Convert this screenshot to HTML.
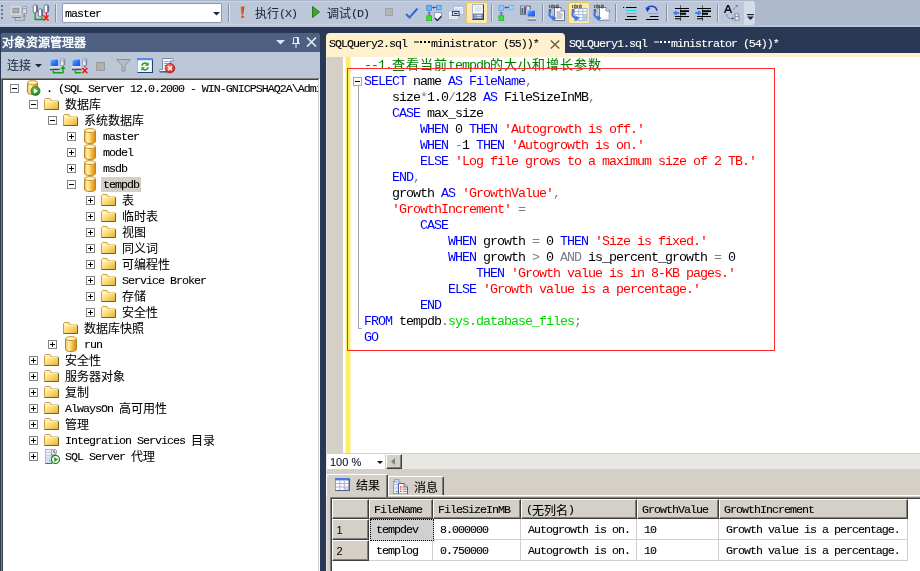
<!DOCTYPE html><html lang="zh"><head><meta charset="utf-8"><title>SSMS</title><style>
*{box-sizing:border-box;margin:0;padding:0}
html,body{width:920px;height:571px;overflow:hidden}
body{position:relative;background:#293955;font-family:"Liberation Mono",monospace;font-size:11.6667px;letter-spacing:-1px;color:#000;line-height:16px;-webkit-text-stroke:0.1px}
#app{position:absolute;left:0;top:0;width:920px;height:571px;overflow:hidden;will-change:transform}
.a{position:absolute}
svg{display:block}
svg.el{display:inline-block;vertical-align:-2px}
svg.cj{display:inline-block;vertical-align:-3px;stroke:currentColor;stroke-width:6px}
svg.cj text{font-family:"Liberation Sans","Noto Sans CJK SC",sans-serif;font-size:1000px;letter-spacing:0;-webkit-text-stroke:0}
/* toolbar */
#tray{left:0;top:0;width:920px;height:27px;background:linear-gradient(#aab6cb 0,#aab6cb 1px,#adb9cd 1px,#adb9cd 25px,#b9c5d8 25px)}
#tb{left:0;top:0;width:755px;height:25px;background:linear-gradient(#aab6cb 0,#aab6cb 1px,#cbd4e4 1px,#cbd4e4 2px,#bcc8da 2px,#bcc8da 24px,#c9d3e3 24px);border-radius:0 4px 4px 0}
.sep{width:1px;top:4px;height:18px;background:#8591a7;box-shadow:1px 0 0 #dde3ee}
.tbt{top:6px;height:16px;color:#1b293e;white-space:nowrap}
.chk{top:2px;height:22px;background:#fde9ae;border:1px solid #e5c365;border-radius:2px}
#combo{left:62px;top:3px;width:160px;height:20px;background:#fff;border:1px solid #8e9bb5;border-radius:2px}
/* explorer */
#oe{left:0;top:33px;width:320px;height:538px;background:#bcc7d8;border-left:1px solid #293955;border-radius:4px 4px 0 0;overflow:hidden}
#oet{left:0;top:0;width:320px;height:19px;background:#4d6082;color:#fff}
#tree{left:0;top:45px;width:319px;height:500px;background:#fff;border:1px solid;border-color:#808080 #fff #fff #808080;overflow:hidden}
#tree:before{content:"";position:absolute;left:0;top:0;right:0;bottom:0;border:1px solid;border-color:#404040 #d4d0c8 #d4d0c8 #404040;z-index:2}
.row{left:0;width:320px;height:16px;white-space:nowrap}
.ex{width:9px;height:9px;border:1px solid #848484;background:#fff}
.ex:before{content:"";position:absolute;left:1px;top:3px;width:5px;height:1px;background:#000}
.ex.p:after{content:"";position:absolute;left:3px;top:1px;width:1px;height:5px;background:#000}
.lbl{top:1px;height:15px;line-height:16px}
.lbl svg.cj{vertical-align:-2px}
.sel{background:#d4d0c8;padding:0 2px;margin-left:-2px}
/* tabs */
#band{left:326px;top:53px;width:594px;height:4px;background:#fff1ce}
#tab1{left:326px;top:33px;width:239px;height:20px;background:#fff1ce;border-radius:4px 4px 0 0;white-space:nowrap}
#tab2{left:566px;top:33px;width:240px;height:19px;color:#fff;white-space:nowrap}
.tabt{left:3px;top:3px;line-height:16px}
/* editor */
#ed{left:326px;top:57px;width:594px;height:396px;background:#fff;overflow:hidden}
#mg{left:0;top:0;width:17px;height:396px;background:#d4d0c8;border-left:1px solid #e6e3dc}
#yb{left:19px;top:0;width:6px;height:396px;background:linear-gradient(90deg,#fffbd8 0,#fff29a 1px,#ffee62 1px,#ffee62 4px,#ffee62 5px,#fff6b8 5px)}
#code{left:38px;top:1px;font-size:13.3333px;letter-spacing:-1px;-webkit-text-stroke:0;line-height:16px;white-space:pre}
#code svg.cj{vertical-align:-2px}
.k{color:#00f}.s{color:#f00}.g{color:#808080}.c{color:#008000}.y{color:#00d800}
#rr{left:347px;top:68px;width:428px;height:283px;border:1px solid #ff2a2a}
/* results */
#rp{left:326px;top:453px;width:594px;height:118px;background:#d4d0c8;box-shadow:inset 1px 0 0 #e8e5de}
#zc{left:1px;top:1px;width:58px;height:15px;background:#fff;font-family:"Liberation Sans",sans-serif;font-size:11px;letter-spacing:0;line-height:15px;color:#10102a}
#sb{left:60px;top:1px;width:16px;height:15px;background:#d4d0c8;border:1px solid;border-color:#fff #404040 #404040 #fff;box-shadow:inset -1px -1px 0 #808080}
#trk{left:76px;top:1px;width:518px;height:15px;background:#e9e7e3}
.rt{white-space:nowrap}
#grid{left:4px;top:44px;width:600px;height:90px;background:#fff;border:1px solid #808080}
#grid:before{content:"";position:absolute;left:0;top:0;right:0;bottom:0;border:1px solid #404040}
.hc{height:20px;background:#d4d0c8;border:1px solid;border-color:#fff #404040 #404040 #fff;box-shadow:inset -1px -1px 0 #808080;white-space:nowrap;overflow:hidden;line-height:16px;padding-top:2px}
.dc{height:21px;border-right:1px solid #d4d0c8;border-bottom:1px solid #d4d0c8;white-space:nowrap;line-height:20px;padding-left:7px;padding-top:1px;overflow:hidden}
.rh{font-family:"Liberation Sans",sans-serif;font-size:11px;letter-spacing:0;padding-left:3.5px;padding-top:1px;line-height:19px;-webkit-text-stroke:0}
</style></head><body><div id="app"><svg width="0" height="0" style="position:absolute"><defs>
<linearGradient id="gFold" x1="0" y1="0" x2="1" y2="1"><stop offset="0" stop-color="#fff9d2"/><stop offset=".5" stop-color="#fbdc7a"/><stop offset="1" stop-color="#eeaa2a"/></linearGradient>
<linearGradient id="gCyl" x1="0" y1="0" x2="1" y2="0"><stop offset="0" stop-color="#f3bd3e"/><stop offset=".3" stop-color="#fff2ac"/><stop offset=".7" stop-color="#f2b230"/><stop offset="1" stop-color="#d68810"/></linearGradient>
<linearGradient id="gMon" x1="0" y1="0" x2="1" y2="1"><stop offset="0" stop-color="#7db4ff"/><stop offset=".5" stop-color="#2f74f4"/><stop offset="1" stop-color="#1550e0"/></linearGradient>
<linearGradient id="gGray" x1="0" y1="0" x2="1" y2="1"><stop offset="0" stop-color="#d8d8d8"/><stop offset="1" stop-color="#9a9a9a"/></linearGradient>
<linearGradient id="gExcl" x1="0" y1="0" x2="1" y2="0"><stop offset="0" stop-color="#f58a4a"/><stop offset="1" stop-color="#c62800"/></linearGradient>
<radialGradient id="gGreen" cx=".4" cy=".35" r=".7"><stop offset="0" stop-color="#6fd05c"/><stop offset="1" stop-color="#1f7a1c"/></radialGradient>
<radialGradient id="gRed" cx=".4" cy=".35" r=".7"><stop offset="0" stop-color="#ff8a7a"/><stop offset="1" stop-color="#c01818"/></radialGradient>

<g id="i-folder">
<path d="M0.5 3.5v10h14v-8.500h-7l-1.500-2.500h-4.500z" fill="url(#gFold)" stroke="#c9a044"/>
<path d="M14.500 5.500v8h-14" stroke="#7c5f26" fill="none"/>
<path d="M1.500 5.500h12" stroke="#fffbe0" stroke-width="1" opacity=".7"/>
</g>
<g id="i-db">
<path d="M2.5 2.5v11c0 1.2 2.4 2 5.5 2s5.500-.8 5.500-2v-11z" fill="url(#gCyl)" stroke="#b8862a"/>
<ellipse cx="8" cy="2.600" rx="5.500" ry="2" fill="#fff3b8" stroke="#c89a3a"/>
</g>
<g id="i-server">
<path d="M2.500 2.500v10c0 1.200 2.200 2 5 2s5-.8 5-2v-10z" fill="url(#gCyl)" stroke="#b8862a"/>
<ellipse cx="7.500" cy="2.600" rx="5" ry="2" fill="#fff3b8" stroke="#c89a3a"/>
<circle cx="10.500" cy="11" r="4.600" fill="url(#gGreen)" stroke="#1c6a1a" stroke-width=".6"/>
<path d="M9 8.500v5l4-2.500z" fill="#fff"/>
</g>
<g id="i-agent">
<rect x="1.500" y="1.500" width="6.500" height="14" fill="#e9effa" stroke="#9fb2d6" stroke-width=".9"/>
<path d="M8 2v13.500h-6.500" stroke="#52648c" stroke-width="1" fill="none"/>
<path d="M2.500 4.500h5M2.500 7.500h5" stroke="#b4c4e4" stroke-width=".9"/>
<rect x="2.300" y="8.500" width="5" height="6" fill="#cfdcf4"/>
<circle cx="9.900" cy="4" r="2.800" fill="#f4f7fc" stroke="#8a96b0" stroke-width=".9"/>
<path d="M9.900 2.300v1.900l1.500 .9" stroke="#222" stroke-width=".9" fill="none"/>
<circle cx="11.500" cy="11.400" r="4" fill="#fff" stroke="#1f7a1c" stroke-width="1.200"/>
<path d="M10.200 8.900v5l3.900-2.500z" fill="#2a9a22"/>
<rect x="5.300" y="12.300" width="1.300" height="1.300" fill="#3fe03a"/>
</g>

<g id="i-conn">
<rect x="0.400" y="1.400" width="9.800" height="8.800" fill="#dfe8f6" stroke="#b4c4de" stroke-width=".8"/>
<rect x="1.400" y="2.400" width="7.800" height="6.600" fill="url(#gMon)"/>
<path d="M0.500 11h10" stroke="#e9eef7" stroke-width="1.400"/>
<path d="M1 12.400h9.500" stroke="#3c4f78" stroke-width="1.600"/>
<path d="M2 11.200h2" stroke="#f6e27a" stroke-width="1"/>
<rect x="11.600" y="1.800" width="4.200" height="6.700" rx=".9" fill="#f7f9fd" stroke="#7f8ea8" stroke-width=".9"/>
<path d="M15 2.300v5.700" stroke="#50608a" stroke-width=".9"/>
<path d="M12.600 3.800h1.600" stroke="#5b6f92" stroke-width=".8"/>

<path d="M4.300 13.500v2.300h9.700v-5" stroke="#14a014" stroke-width="1.400" fill="none"/>
<path d="M11.300 12l2.700-3.200 2.700 3.200z" fill="#14a014"/>
</g>
<g id="i-disc">
<rect x="0.400" y="1.400" width="9.800" height="8.800" fill="#dfe8f6" stroke="#b4c4de" stroke-width=".8"/>
<rect x="1.400" y="2.400" width="7.800" height="6.600" fill="url(#gMon)"/>
<path d="M0.500 11h10" stroke="#e9eef7" stroke-width="1.400"/>
<path d="M1 12.400h9.500" stroke="#3c4f78" stroke-width="1.600"/>
<path d="M2 11.200h2" stroke="#f6e27a" stroke-width="1"/>
<rect x="11.600" y="1.800" width="4.200" height="6.700" rx=".9" fill="#f7f9fd" stroke="#7f8ea8" stroke-width=".9"/>
<path d="M15 2.300v5.700" stroke="#50608a" stroke-width=".9"/>
<path d="M12.600 3.800h1.600" stroke="#5b6f92" stroke-width=".8"/>

<path d="M4.300 13.500v2.300h5.700" stroke="#14a014" stroke-width="1.400" fill="none"/>
<path d="M14 8.700v2" stroke="#f01818" stroke-width="1"/>
<path d="M11.300 11l5 5.300M16.300 11l-5 5.300" stroke="#f01818" stroke-width="1.600"/>
</g>
<g id="i-conn-gray">
<rect x="1" y="1.500" width="9.500" height="8" fill="#c9ccd2" stroke="#d9dce2" stroke-width=".8"/>
<rect x="2.500" y="3" width="6.500" height="5" fill="#8f9399"/>
<rect x="3.300" y="3.800" width="4.900" height="3.400" fill="#a9adb3"/>
<path d="M1.500 11h9.500" stroke="#c0c4ca" stroke-width="2.400"/>
<path d="M2 12.500h9" stroke="#7d828a" stroke-width="1"/>
<rect x="12.400" y="1.500" width="4.200" height="7" rx=".8" fill="#d9dce2" stroke="#8d929b" stroke-width=".9"/>
<path d="M13.300 3.500h2.400" stroke="#7d828a" stroke-width=".8"/>
<path d="M5.300 13v2.700h9v-5.500" stroke="#8f949c" stroke-width="1.100" fill="none"/>
<path d="M12 11.700l2.300-2.700 2.300 2.700z" fill="#8f949c"/>
</g>
<g id="i-chgconn">
<rect x="1.200" y="1" width="4.300" height="7.500" rx="1.500" fill="#fdfdff" stroke="#50608a" stroke-width=".8"/>
<path d="M4.800 1.500v6.500" stroke="#2f3f68" stroke-width="1"/>
<rect x="6.400" y="5" width="4.200" height="7.400" rx="1.500" fill="#fdfdff" stroke="#50608a" stroke-width=".8"/>
<path d="M9.900 5.500v6.500" stroke="#2f3f68" stroke-width="1"/>
<rect x="12.200" y="1" width="4.400" height="7.500" rx="1.500" fill="#fdfdff" stroke="#50608a" stroke-width=".8"/>
<path d="M15.900 1.500v6.500" stroke="#2f3f68" stroke-width="1"/>
<path d="M3.100 8.600v6.900h6.900v-3" stroke="#149a14" stroke-width="1.300" fill="none"/>
<path d="M14.400 8.600v5" stroke="#f01818" stroke-width="1.100"/>
<path d="M10.500 15.500h3" stroke="#f01818" stroke-width="1.100"/>
<path d="M11.500 11.500l5 5M16.500 11.500l-5 5" stroke="#f01818" stroke-width="1.500"/>
</g>
<g id="i-excl">
<path d="M1.300 0.500h4l-1 8h-2z" fill="url(#gExcl)"/>
<circle cx="3.300" cy="10.800" r="1.500" fill="url(#gExcl)"/>
</g>
<g id="i-plan">
<rect x="0.800" y="0.500" width="4.700" height="5" fill="#6ab6ff" stroke="#3a86e8" stroke-width=".8"/>
<rect x="10.500" y="0.500" width="4.700" height="4.300" fill="#7cc2ff" stroke="#3a8ee8" stroke-width=".8"/>
<rect x="0.800" y="10.800" width="4.700" height="5" fill="#3fe03a" stroke="#18b818" stroke-width=".8"/>
<path d="M6.500 2.500h4M3.200 7v3.500" stroke="#33507e" stroke-width=".9"/>
<path d="M6.500 2.500l1.300-1.300M6.500 2.500l1.300 1.300M3.200 7l-1.300 1.300M3.200 7l1.300 1.300" stroke="#33507e" stroke-width=".8"/>
<path d="M8.300 7.500h7.200v4.500l-3.500 3.500h-1.500l-2.200-3.500z" fill="#f6f8fc" stroke="#7a86a0" stroke-width=".8"/>
<path d="M9 13l2.200 2.500 4.200-4.200" stroke="#1b2a4a" stroke-width="1.300" fill="none"/>
</g>
<g id="i-plan2">
<rect x="1" y="0.500" width="4.700" height="5" fill="#8fcaff" stroke="#5aa2f0" stroke-width=".8"/>
<rect x="11" y="0.500" width="4.700" height="4.300" fill="#a6d6ff" stroke="#62aef2" stroke-width=".8"/>
<rect x="1" y="10.800" width="4.700" height="5" fill="#3fe03a" stroke="#18b818" stroke-width=".8"/>
<path d="M7 2.500h4M3.300 7v3.500" stroke="#33507e" stroke-width=".9"/>
<path d="M7 2.500l1.300-1.300M7 2.500l1.300 1.300M3.300 7l-1.300 1.300M3.300 7l1.300 1.300" stroke="#33507e" stroke-width=".8"/>
</g>
<g id="i-qopt">
<rect x="5.500" y="0.500" width="10" height="9" fill="#f1f4fa" stroke="#aebbd4" stroke-width=".9"/>
<rect x="5.500" y="0.500" width="10" height="1.500" fill="#a9c6f2"/>
<path d="M7 4h3M11 4h3M11 6h3M11 8h3" stroke="#c0c9dc" stroke-width=".9"/>
<rect x="0.500" y="5.500" width="10" height="9" fill="#f6f8fc" stroke="#aebbd4" stroke-width=".9"/>
<rect x="0.500" y="5.500" width="10" height="1.300" fill="#b5cdf2"/>
<path d="M2 10.500h3M2 12.500h3M6 12.500h3" stroke="#c0c9dc" stroke-width=".9"/>
<rect x="4.500" y="6.500" width="6.500" height="4" fill="#e4e9f5" stroke="#3a4a78" stroke-width="1.100"/>
<path d="M6.300 8.500h3" stroke="#20284a" stroke-width="1.100"/>
</g>
<g id="i-intelli">
<rect x="0.500" y="0.500" width="11" height="15" fill="#fcfdff" stroke="#aab4cc"/>
<path d="M11.500 0.500v15h-11" stroke="#2f3f68" stroke-width="1.200" fill="none"/>
<path d="M2.500 2.800h7M2.500 4.800h7M2.500 6.800h7" stroke="#c2cadc" stroke-width=".9"/>
<rect x="1" y="9.500" width="10" height="5.500" fill="#6f7fa6"/>
<path d="M2.500 11.300h1M4.500 11.300h5M2.500 13.300h1M4.500 13.300h5" stroke="#f4f6fb" stroke-width="1.100"/>
</g>
<g id="i-stats">
<rect x="0.500" y="1" width="10" height="8.500" fill="#fff" stroke="#6a7690" stroke-width=".9"/>
<rect x="1.300" y="2.500" width="2.200" height="6.500" fill="#2e8b2e"/><rect x="4" y="1.500" width="2.200" height="7.500" fill="#7b3fb0"/><rect x="6.800" y="1.500" width="3" height="3.500" fill="#e8ecf4" stroke="#6a7690" stroke-width=".6"/>
<rect x="6.500" y="4.500" width="9.500" height="8" fill="#cfdcf2" stroke="#aebcd8" stroke-width=".8"/>
<rect x="7.500" y="5.500" width="7.500" height="6" fill="url(#gMon)"/>
<path d="M7.500 13.700h8.500" stroke="#f2e6a8" stroke-width="1.600"/>
<path d="M7.500 15h8.500" stroke="#5a6a8c" stroke-width="1.100"/>
</g>
<g id="i-arrow1010">
<path d="M1.700 1v3M6.700 1v3" stroke="#222" stroke-width=".8" fill="none"/>
<path d="M3.700 1h1.500v3h-1.500zM8.700 1h1.500v3h-1.500zM1.200 5.500h1.500v2.500h-1.500z" stroke="#222" stroke-width=".7" fill="none"/>

<path d="M2.300 7.500c-2 3-.5 6 2.700 6.700" stroke="#3f74e0" stroke-width="2" fill="none"/>
<path d="M4.300 11.200l4.200 3-4.200 2.800z" fill="#3f74e0"/>
</g>
<g id="i-rtext">
<path d="M6.500 3.500h6.500l3.500 3.500v9.500h-10z" fill="#fafbfe" stroke="#5a6580" stroke-width=".9"/>
<path d="M13 3.500v3.500h3.500" fill="#dde3f0" stroke="#5a6580" stroke-width=".8"/>
<path d="M8.500 8h4M8.500 10h6M8.500 12h6M8.500 14h6" stroke="#70788c" stroke-width=".8"/>

<path d="M1.700 1v3M6.700 1v3" stroke="#222" stroke-width=".8" fill="none"/>
<path d="M3.700 1h1.500v3h-1.500zM8.700 1h1.500v3h-1.500zM1.200 5.500h1.500v2.500h-1.500z" stroke="#222" stroke-width=".7" fill="none"/>

<path d="M2.300 7.500c-2 3-.5 6 2.700 6.700" stroke="#3f74e0" stroke-width="2" fill="none"/>
<path d="M4.300 11.200l4.200 3-4.200 2.800z" fill="#3f74e0"/>
</g>
<g id="i-rgrid">
<rect x="3.500" y="4.500" width="12.500" height="12" fill="#fbfcff" stroke="#9aa8c8" stroke-width=".8"/>
<path d="M3.500 7.500h12.500M3.500 10.500h12.500M3.500 13.500h12.500M7.700 4.500v12M11.800 4.500v12" stroke="#a9b8dc" stroke-width=".9"/>
<rect x="12" y="11" width="4" height="5.500" fill="#a8c4f0" opacity=".8"/>

<path d="M1.700 1v3M6.700 1v3" stroke="#222" stroke-width=".8" fill="none"/>
<path d="M3.700 1h1.500v3h-1.500zM8.700 1h1.500v3h-1.500zM1.200 5.500h1.500v2.500h-1.500z" stroke="#222" stroke-width=".7" fill="none"/>

<path d="M2.300 7.500c-2 3-.5 6 2.700 6.700" stroke="#3f74e0" stroke-width="2" fill="none"/>
<path d="M4.300 11.200l4.200 3-4.200 2.800z" fill="#3f74e0"/>
</g>
<g id="i-rfile">
<path d="M6.500 3.500h6.500l3.500 3.500v9.500h-10z" fill="#ffffff" stroke="#6a7690" stroke-width=".9"/>
<path d="M13 3.500v3.500h3.500" fill="#dde3f0" stroke="#6a7690" stroke-width=".8"/>
<path d="M9 15.500h7v-7" stroke="#ccd4e4" stroke-width="1.400" fill="none"/>

<path d="M1.700 1v3M6.700 1v3" stroke="#222" stroke-width=".8" fill="none"/>
<path d="M3.700 1h1.500v3h-1.500zM8.700 1h1.500v3h-1.500zM1.200 5.500h1.500v2.500h-1.500z" stroke="#222" stroke-width=".7" fill="none"/>

<path d="M2.300 7.500c-2 3-.5 6 2.700 6.700" stroke="#3f74e0" stroke-width="2" fill="none"/>
<path d="M4.300 11.200l4.200 3-4.200 2.800z" fill="#3f74e0"/>
</g>
<g id="i-cmt">
<path d="M1 2.500h1.200M4 2.500h10.500M5 11.500h9.500M3 14.500h11.500" stroke="#000" stroke-width="1.100"/>
<path d="M4 5.500h10.500M4 8.500h10.500" stroke="#10e0e8" stroke-width="1.100"/>
</g>
<g id="i-ucmt">
<path d="M11.800 5.800c0-3-2.600-4.600-5.300-4.600s-4.300 1.400-4.300 3" stroke="#1a3fc4" stroke-width="1.600" fill="none"/>
<path d="M0.300 2.500l5 .8-3.200 3.700z" fill="#1a3fc4"/>
<path d="M3 8.500h10.500" stroke="#10e0e8" stroke-width="1.100"/>
<path d="M5 11.500h8.500M1 14.500h12.500" stroke="#000" stroke-width="1.100"/>
</g>
<g id="i-dedent">
<path d="M8.500 0.500v15" stroke="#000" stroke-width="1" stroke-dasharray="1 1"/>
<path d="M3 3.500h14M3 11.500h14M3 13.700h6" stroke="#000" stroke-width="1.100"/>
<path d="M8 6.100h9M8 8.800h6" stroke="#000" stroke-width="1.900"/>
<path d="M0.800 8l3.700-2.700v1.800h2.700v1.800h-2.700v1.800z" fill="#3f7be6"/>
</g>
<g id="i-indent">
<path d="M7.500 0.500v15" stroke="#000" stroke-width="1" stroke-dasharray="1 1"/>
<path d="M2 3.500h14M2 11.500h14M2 13.700h6" stroke="#000" stroke-width="1.100"/>
<path d="M7 6.100h9M7 8.800h6" stroke="#000" stroke-width="1.900"/>
<path d="M6.700 8l-3.700-2.700v1.800h-2.700v1.800h2.700v1.800z" fill="#3f7be6"/>
</g>
<g id="i-ab">
<path d="M0.600 9l3-7.300h.9l3 7.300M1.800 6.300h4.300" stroke="#111" stroke-width="1.400" fill="none"/>
<path d="M9 6l4-4.300M13.300 1.500h-2.300M13.300 1.500v2.300" stroke="#52679a" stroke-width=".9" fill="none" stroke-dasharray="1.100 .9"/>
<path d="M2.500 10.500c.5 2.500 2 4 4.500 4" stroke="#3a5aa8" stroke-width="1" fill="none" stroke-dasharray="1.100 1"/>
<path d="M7 14.500h2.500M8.300 13.200l1.300 1.300-1.300 1.300" stroke="#3a5aa8" stroke-width=".9" fill="none"/>
<path d="M11 9.800h2.500c1.800 0 1.800 3 0 3h-2.500zM11 12.800h2.800c2 0 2 3.500 0 3.500h-2.800z" fill="#eef1f6" stroke="#7f8a9a" stroke-width="1.100"/>
</g>
<g id="i-refresh">
<rect x="0.500" y="0.500" width="15" height="14" fill="#f4f8ff" stroke="#9db8ea"/>
<path d="M15.500 0.500v14h-15" stroke="#1f3f7a" stroke-width="1.100" fill="none"/>
<rect x="0" y="0" width="16" height="2.200" fill="#5a8be8"/>
<path d="M4.800 7.700a3.300 3.300 0 0 1 5.400-1.700" stroke="#3a9a1c" stroke-width="1.600" fill="none"/>
<path d="M11.700 4v3.800h-3.800z" fill="#3a9a1c"/>
<path d="M11.200 9.300a3.300 3.300 0 0 1-5.400 1.700" stroke="#3a9a1c" stroke-width="1.600" fill="none"/>
<path d="M4.300 13v-3.800h3.800z" fill="#3a9a1c"/>
</g>
<g id="i-script">
<path d="M3.500 1.500h10c1.500 0 1.500 2.500 0 2.500h-2.500v8c0 2-1 3-2.500 3h-7c-1.500 0-1.500-2.500 0-2.500h2v-9c0-1 0-2 0-2z" fill="#f2f5fb" stroke="#6e7ea0" stroke-width=".9"/>
<path d="M0.800 14.800h8" stroke="#2a3a60" stroke-width="1"/>
<path d="M5 4.500h4.500M5 6.500h4.500M5 8.500h3" stroke="#7a9ae0" stroke-width=".9"/>
<circle cx="11" cy="11.200" r="4.800" fill="url(#gRed)" stroke="#a01010" stroke-width=".6"/>
<path d="M9 9.200l4 4M13 9.200l-4 4" stroke="#fff" stroke-width="1.500"/>
</g>
<g id="i-grid">
<rect x="0.500" y="0.500" width="13.500" height="12" fill="#fff" stroke="#8a96b8" stroke-width=".9"/>
<rect x="0" y="0" width="14.500" height="2.400" fill="#4a7adc"/>
<path d="M1 5.500h13M1 9h13M4.800 2.500v10M9.300 2.500v10" stroke="#a0aac8" stroke-width=".9"/>
<rect x="9.800" y="9.300" width="4" height="3" fill="#b8ccf4" opacity=".8"/>
<path d="M14.300 1v11.800h-14" stroke="#3a3f66" stroke-width="1" fill="none"/>
</g>
<g id="i-msg">
<rect x="0.500" y="2.500" width="6.500" height="12" fill="#e6ecfa" stroke="#8a9ad0" stroke-width=".9"/>
<rect x="1.500" y="0.500" width="4.500" height="2.500" fill="#cfdaf2" stroke="#8a9ad0" stroke-width=".8"/>
<path d="M1.500 5.500h4.500M1.500 9h4.500" stroke="#a9b8e0" stroke-width=".9"/>
<path d="M3 12.500h1.500" stroke="#2ab02a" stroke-width="1.200"/>
<path d="M5.500 4.500h5.500l3.500 3.500v7h-9z" fill="#fff" stroke="#3a4aa0" stroke-width=".9"/>
<path d="M11 4.500v3.500h3.500" fill="#c8d4f0" stroke="#3a4aa0" stroke-width=".8"/>
<path d="M7 8h1.500M7 10.200h1.500M7 12.400h1.500" stroke="#e04828" stroke-width="1.300"/>
<path d="M9.500 8h2M9.500 10.200h3M9.500 12.400h3" stroke="#f08060" stroke-width="1.300"/>
<path d="M12.500 10.200h1M12.500 12.400h1" stroke="#2a9a2a" stroke-width="1.300"/>
</g>
</defs></svg>
<div class="a" id="tray"></div><div class="a" id="tb"><svg class="a" style="left:1px;top:5px" width="3" height="15"><rect x="0" y="0" width="2" height="2" fill="#6a7a99"/><rect x="0" y="4" width="2" height="2" fill="#6a7a99"/><rect x="0" y="8" width="2" height="2" fill="#6a7a99"/><rect x="0" y="12" width="2" height="2" fill="#6a7a99"/></svg><svg class="a" style="left:10px;top:5px" width="18" height="16"><use href="#i-conn-gray"/></svg><svg class="a" style="left:32px;top:4px" width="18" height="17"><use href="#i-chgconn"/></svg><div class="a sep" style="left:55px"></div><div class="a" id="combo"><span class="a" style="left:2px;top:2px;line-height:16px">master</span><svg class="a" style="left:150px;top:8px" width="7" height="4"><path d="M0 0h7L3.5 3.500z" fill="#1b293e"/></svg></div><div class="a sep" style="left:228px"></div><svg class="a" style="left:239px;top:6px" width="7" height="13"><use href="#i-excl"/></svg><svg class="cj a" style="left:255px;top:7px;color:#1b293e" overflow="visible" width="24" height="12" viewBox="0 -880 2000 1000" fill="#1b293e"><text x="0" y="0">执行</text></svg><div class="a tbt" style="left:279px">(X)</div><svg class="a" style="left:312px;top:6px" width="8" height="12"><path d="M0.5 0.5L7.5 6L0.5 11.5z" fill="#3fa32f" stroke="#2a7a1e" stroke-width="1"/></svg><svg class="cj a" style="left:327px;top:7px;color:#1b293e" overflow="visible" width="24" height="12" viewBox="0 -880 2000 1000" fill="#1b293e"><text x="0" y="0">调试</text></svg><div class="a tbt" style="left:351px">(D)</div><svg class="a" style="left:385px;top:8px" width="8" height="8"><rect width="8" height="8" fill="#a3a3a3"/><rect x="1" y="1" width="6" height="6" fill="#b4b4b4"/></svg><svg class="a" style="left:405px;top:7px" width="14" height="12"><path d="M1 7L4.500 10.500L12.500 1.500" stroke="#3566d6" stroke-width="1.900" fill="none"/></svg><svg class="a" style="left:426px;top:5px" width="16" height="16"><use href="#i-plan"/></svg><svg class="a" style="left:448px;top:5px" width="16" height="15"><use href="#i-qopt"/></svg><div class="a chk" style="left:466px;width:22px"></div><svg class="a" style="left:472px;top:4px" width="12" height="16"><use href="#i-intelli"/></svg><div class="a sep" style="left:491px"></div><svg class="a" style="left:498px;top:5px" width="16" height="16"><use href="#i-plan2"/></svg><svg class="a" style="left:520px;top:5px" width="17" height="16"><use href="#i-stats"/></svg><div class="a sep" style="left:542px"></div><svg class="a" style="left:548px;top:4px" width="17" height="17"><use href="#i-rtext"/></svg><div class="a chk" style="left:568px;width:22px"></div><svg class="a" style="left:571px;top:4px" width="17" height="17"><use href="#i-rgrid"/></svg><svg class="a" style="left:593px;top:4px" width="17" height="17"><use href="#i-rfile"/></svg><div class="a sep" style="left:615px"></div><svg class="a" style="left:622px;top:5px" width="16" height="16"><use href="#i-cmt"/></svg><svg class="a" style="left:645px;top:5px" width="16" height="16"><use href="#i-ucmt"/></svg><div class="a sep" style="left:666px"></div><svg class="a" style="left:672px;top:5px" width="17" height="16"><use href="#i-dedent"/></svg><svg class="a" style="left:695px;top:5px" width="17" height="16"><use href="#i-indent"/></svg><div class="a sep" style="left:717px"></div><svg class="a" style="left:724px;top:4px" width="16" height="17"><use href="#i-ab"/></svg><div class="a" style="left:744px;top:1px;width:11px;height:24px;background:#d5dbe8;border-radius:0 4px 4px 0"></div><svg class="a" style="left:747px;top:14px" width="7" height="6"><rect x="0" y="0" width="7" height="1.2" fill="#1b293e"/><path d="M0 2.500h7L3.500 6z" fill="#1b293e"/></svg></div><div class="a" id="oe"><div class="a" id="oet"><svg class="cj a" style="stroke-width:40px;left:1px;top:3px;color:#fff" overflow="visible" width="84" height="12" viewBox="0 -880 7000 1000" fill="#fff"><text x="0" y="0">对象资源管理器</text></svg><svg class="a" style="left:275px;top:7px" width="9" height="5"><path d="M0 0h9L4.500 4.500z" fill="#dfe5f0"/></svg><svg class="a" style="left:291px;top:4px" width="8" height="11"><path d="M2.500 0.500h4v5.500M1.500 0.500v5.500M0 6.500h8M4 7v4" stroke="#e8edf6" stroke-width="1" fill="none"/><rect x="5" y="1" width="1.500" height="5" fill="#e8edf6"/></svg><svg class="a" style="left:305px;top:4px" width="11" height="10"><path d="M1 0.500L10 9.500M10 0.500L1 9.500" stroke="#e8edf6" stroke-width="1.600" fill="none"/></svg></div><svg class="cj a" style="left:6px;top:26px;color:#1b293e" overflow="visible" width="24" height="12" viewBox="0 -880 2000 1000" fill="#1b293e"><text x="0" y="0">连接</text></svg><svg class="a" style="left:34px;top:31px" width="7" height="4"><path d="M0 0h7L3.500 3.500z" fill="#1b293e"/></svg><svg class="a" style="left:48px;top:24px" width="17" height="17"><use href="#i-conn"/></svg><svg class="a" style="left:70px;top:24px" width="17" height="17"><use href="#i-disc"/></svg><svg class="a" style="left:95px;top:29px" width="9" height="9"><rect width="9" height="9" fill="#9c9c9c"/><rect x="1" y="1" width="7" height="7" fill="#b0b0b0"/></svg><svg class="a" style="left:115px;top:26px" width="15" height="13"><path d="M0.500 0.500h14L9 6.500v5.500h-3V6.500z" fill="#b9bcc0" stroke="#8d9095"/></svg><svg class="a" style="left:136px;top:25px" width="16" height="15"><use href="#i-refresh"/></svg><svg class="a" style="left:158px;top:24px" width="17" height="17"><use href="#i-script"/></svg><div class="a" id="tree"><div class="a row" style="top:1px"><i class="a ex" style="left:8px;top:4px"></i><svg class="a" style="left:23px;top:0" width="16" height="16"><use href="#i-server"/></svg><span class="a lbl" style="left:44px">. (SQL Server 12.0.2000 - WIN-GNICPSHAQ2A\Administrator)</span></div><div class="a row" style="top:17px"><i class="a ex" style="left:27px;top:4px"></i><svg class="a" style="left:42px;top:0" width="16" height="16"><use href="#i-folder"/></svg><span class="a lbl" style="left:63px"><svg class="cj" overflow="visible" width="36" height="12" viewBox="0 -880 3000 1000"><text x="0" y="0">数据库</text></svg></span></div><div class="a row" style="top:33px"><i class="a ex" style="left:46px;top:4px"></i><svg class="a" style="left:61px;top:0" width="16" height="16"><use href="#i-folder"/></svg><span class="a lbl" style="left:82px"><svg class="cj" overflow="visible" width="60" height="12" viewBox="0 -880 5000 1000"><text x="0" y="0">系统数据库</text></svg></span></div><div class="a row" style="top:49px"><i class="a ex p" style="left:65px;top:4px"></i><svg class="a" style="left:80px;top:0" width="16" height="16"><use href="#i-db"/></svg><span class="a lbl" style="left:101px">master</span></div><div class="a row" style="top:65px"><i class="a ex p" style="left:65px;top:4px"></i><svg class="a" style="left:80px;top:0" width="16" height="16"><use href="#i-db"/></svg><span class="a lbl" style="left:101px">model</span></div><div class="a row" style="top:81px"><i class="a ex p" style="left:65px;top:4px"></i><svg class="a" style="left:80px;top:0" width="16" height="16"><use href="#i-db"/></svg><span class="a lbl" style="left:101px">msdb</span></div><div class="a row" style="top:97px"><i class="a ex" style="left:65px;top:4px"></i><svg class="a" style="left:80px;top:0" width="16" height="16"><use href="#i-db"/></svg><span class="a lbl sel" style="left:101px">tempdb</span></div><div class="a row" style="top:113px"><i class="a ex p" style="left:84px;top:4px"></i><svg class="a" style="left:99px;top:0" width="16" height="16"><use href="#i-folder"/></svg><span class="a lbl" style="left:120px"><svg class="cj" overflow="visible" width="12" height="12" viewBox="0 -880 1000 1000"><text x="0" y="0">表</text></svg></span></div><div class="a row" style="top:129px"><i class="a ex p" style="left:84px;top:4px"></i><svg class="a" style="left:99px;top:0" width="16" height="16"><use href="#i-folder"/></svg><span class="a lbl" style="left:120px"><svg class="cj" overflow="visible" width="36" height="12" viewBox="0 -880 3000 1000"><text x="0" y="0">临时表</text></svg></span></div><div class="a row" style="top:145px"><i class="a ex p" style="left:84px;top:4px"></i><svg class="a" style="left:99px;top:0" width="16" height="16"><use href="#i-folder"/></svg><span class="a lbl" style="left:120px"><svg class="cj" overflow="visible" width="24" height="12" viewBox="0 -880 2000 1000"><text x="0" y="0">视图</text></svg></span></div><div class="a row" style="top:161px"><i class="a ex p" style="left:84px;top:4px"></i><svg class="a" style="left:99px;top:0" width="16" height="16"><use href="#i-folder"/></svg><span class="a lbl" style="left:120px"><svg class="cj" overflow="visible" width="36" height="12" viewBox="0 -880 3000 1000"><text x="0" y="0">同义词</text></svg></span></div><div class="a row" style="top:177px"><i class="a ex p" style="left:84px;top:4px"></i><svg class="a" style="left:99px;top:0" width="16" height="16"><use href="#i-folder"/></svg><span class="a lbl" style="left:120px"><svg class="cj" overflow="visible" width="48" height="12" viewBox="0 -880 4000 1000"><text x="0" y="0">可编程性</text></svg></span></div><div class="a row" style="top:193px"><i class="a ex p" style="left:84px;top:4px"></i><svg class="a" style="left:99px;top:0" width="16" height="16"><use href="#i-folder"/></svg><span class="a lbl" style="left:120px">Service Broker</span></div><div class="a row" style="top:209px"><i class="a ex p" style="left:84px;top:4px"></i><svg class="a" style="left:99px;top:0" width="16" height="16"><use href="#i-folder"/></svg><span class="a lbl" style="left:120px"><svg class="cj" overflow="visible" width="24" height="12" viewBox="0 -880 2000 1000"><text x="0" y="0">存储</text></svg></span></div><div class="a row" style="top:225px"><i class="a ex p" style="left:84px;top:4px"></i><svg class="a" style="left:99px;top:0" width="16" height="16"><use href="#i-folder"/></svg><span class="a lbl" style="left:120px"><svg class="cj" overflow="visible" width="36" height="12" viewBox="0 -880 3000 1000"><text x="0" y="0">安全性</text></svg></span></div><div class="a row" style="top:241px"><svg class="a" style="left:61px;top:0" width="16" height="16"><use href="#i-folder"/></svg><span class="a lbl" style="left:82px"><svg class="cj" overflow="visible" width="60" height="12" viewBox="0 -880 5000 1000"><text x="0" y="0">数据库快照</text></svg></span></div><div class="a row" style="top:257px"><i class="a ex p" style="left:46px;top:4px"></i><svg class="a" style="left:61px;top:0" width="16" height="16"><use href="#i-db"/></svg><span class="a lbl" style="left:82px">run</span></div><div class="a row" style="top:273px"><i class="a ex p" style="left:27px;top:4px"></i><svg class="a" style="left:42px;top:0" width="16" height="16"><use href="#i-folder"/></svg><span class="a lbl" style="left:63px"><svg class="cj" overflow="visible" width="36" height="12" viewBox="0 -880 3000 1000"><text x="0" y="0">安全性</text></svg></span></div><div class="a row" style="top:289px"><i class="a ex p" style="left:27px;top:4px"></i><svg class="a" style="left:42px;top:0" width="16" height="16"><use href="#i-folder"/></svg><span class="a lbl" style="left:63px"><svg class="cj" overflow="visible" width="60" height="12" viewBox="0 -880 5000 1000"><text x="0" y="0">服务器对象</text></svg></span></div><div class="a row" style="top:305px"><i class="a ex p" style="left:27px;top:4px"></i><svg class="a" style="left:42px;top:0" width="16" height="16"><use href="#i-folder"/></svg><span class="a lbl" style="left:63px"><svg class="cj" overflow="visible" width="24" height="12" viewBox="0 -880 2000 1000"><text x="0" y="0">复制</text></svg></span></div><div class="a row" style="top:321px"><i class="a ex p" style="left:27px;top:4px"></i><svg class="a" style="left:42px;top:0" width="16" height="16"><use href="#i-folder"/></svg><span class="a lbl" style="left:63px">AlwaysOn <svg class="cj" overflow="visible" width="48" height="12" viewBox="0 -880 4000 1000"><text x="0" y="0">高可用性</text></svg></span></div><div class="a row" style="top:337px"><i class="a ex p" style="left:27px;top:4px"></i><svg class="a" style="left:42px;top:0" width="16" height="16"><use href="#i-folder"/></svg><span class="a lbl" style="left:63px"><svg class="cj" overflow="visible" width="24" height="12" viewBox="0 -880 2000 1000"><text x="0" y="0">管理</text></svg></span></div><div class="a row" style="top:353px"><i class="a ex p" style="left:27px;top:4px"></i><svg class="a" style="left:42px;top:0" width="16" height="16"><use href="#i-folder"/></svg><span class="a lbl" style="left:63px">Integration Services <svg class="cj" overflow="visible" width="24" height="12" viewBox="0 -880 2000 1000"><text x="0" y="0">目录</text></svg></span></div><div class="a row" style="top:369px"><i class="a ex p" style="left:27px;top:4px"></i><svg class="a" style="left:42px;top:0" width="16" height="16"><use href="#i-agent"/></svg><span class="a lbl" style="left:63px">SQL Server <svg class="cj" overflow="visible" width="24" height="12" viewBox="0 -880 2000 1000"><text x="0" y="0">代理</text></svg></span></div></div></div><div class="a" id="band"></div><div class="a" id="tab1"><span class="a tabt">SQLQuery2.sql <svg class="el" width="18" height="12" role="img" aria-label="-..."><rect x="1" y="4.500" width="5" height="1"/><rect x="7" y="4" width="2" height="2"/><rect x="11" y="4" width="2" height="2"/><rect x="15" y="4" width="2" height="2"/></svg>ministrator (55))*</span><svg class="a" style="left:224px;top:7px" width="10" height="9"><path d="M0.800 0.500L9.200 8.500M9.200 0.500L0.800 8.500" stroke="#75633d" stroke-width="1.500" fill="none"/></svg></div><div class="a" id="tab2"><span class="a tabt">SQLQuery1.sql <svg class="el" width="18" height="12" fill="#fff" role="img" aria-label="-..."><rect x="1" y="4.500" width="5" height="1"/><rect x="7" y="4" width="2" height="2"/><rect x="11" y="4" width="2" height="2"/><rect x="15" y="4" width="2" height="2"/></svg>ministrator (54))*</span></div><div class="a" id="ed"><div class="a" id="mg"></div><div class="a" id="yb"></div><div class="a" style="left:32px;top:29px;width:1px;height:243px;background:#a5a5a5"></div><div class="a" style="left:32px;top:271px;width:4px;height:1px;background:#a5a5a5"></div><i class="a ex" style="left:27px;top:20px;border-color:#a5a5a5"></i><div class="a" id="code"><span class="c">--1.<svg class="cj" overflow="visible" width="56" height="13" viewBox="0 -880 4308 1000" style="color:#008000" fill="#008000"><text x="0" y="0" style="letter-spacing:77px">查看当前</text></svg>tempdb<svg class="cj" overflow="visible" width="112" height="13" viewBox="0 -880 8615 1000" style="color:#008000" fill="#008000"><text x="0" y="0" style="letter-spacing:77px">的大小和增长参数</text></svg></span>
<span class="k">SELECT</span> name <span class="k">AS</span> <span class="k">FileName</span><span class="g">,</span>
    size<span class="g">*</span>1.0<span class="g">/</span>128 <span class="k">AS</span> FileSizeInMB<span class="g">,</span>
    <span class="k">CASE</span> max_size
        <span class="k">WHEN</span> 0 <span class="k">THEN</span> <span class="s">&#x27;Autogrowth is off.&#x27;</span>
        <span class="k">WHEN</span> <span class="g">-</span>1 <span class="k">THEN</span> <span class="s">&#x27;Autogrowth is on.&#x27;</span>
        <span class="k">ELSE</span> <span class="s">&#x27;Log file grows to a maximum size of 2 TB.&#x27;</span>
    <span class="k">END</span><span class="g">,</span>
    growth <span class="k">AS</span> <span class="s">&#x27;GrowthValue&#x27;</span><span class="g">,</span>
    <span class="s">&#x27;GrowthIncrement&#x27;</span> <span class="g">=</span>
        <span class="k">CASE</span>
            <span class="k">WHEN</span> growth <span class="g">=</span> 0 <span class="k">THEN</span> <span class="s">&#x27;Size is fixed.&#x27;</span>
            <span class="k">WHEN</span> growth <span class="g">&gt;</span> 0 <span class="g">AND</span> is_percent_growth <span class="g">=</span> 0
                <span class="k">THEN</span> <span class="s">&#x27;Growth value is in 8-KB pages.&#x27;</span>
            <span class="k">ELSE</span> <span class="s">&#x27;Growth value is a percentage.&#x27;</span>
        <span class="k">END</span>
<span class="k">FROM</span> tempdb<span class="g">.</span><span class="y">sys</span><span class="g">.</span><span class="y">database_files</span><span class="g">;</span>
<span class="k">GO</span></div></div><div class="a" id="rr"></div><div class="a" id="rp"><div class="a" id="zc"><span class="a" style="left:3px;top:1px">100 %</span><svg class="a" style="left:50px;top:7px" width="6" height="3"><path d="M0 0h6L3 3z" fill="#10102a"/></svg></div><div class="a" id="sb"><svg class="a" style="left:4px;top:3px" width="4" height="7"><path d="M4 0v7L0 3.500z" fill="#808080"/></svg></div><div class="a" id="trk"></div><div class="a" style="left:62px;top:42px;width:532px;height:1px;background:#fff"></div><div class="a" style="left:0;top:21px;width:62px;height:23px;background:#d4d0c8;border-top:1px solid #fff;border-left:1px solid #fff;border-right:1px solid #404040;border-radius:3px 2px 0 0;box-shadow:inset -1px 0 0 #808080"></div><svg class="a" style="left:9px;top:25px" width="15" height="13"><use href="#i-grid"/></svg><svg class="cj a" style="left:30px;top:26px" overflow="visible" width="24" height="12" viewBox="0 -880 2000 1000"><text x="0" y="0">结果</text></svg><div class="a" style="left:62px;top:23px;width:56px;height:19px;border-top:1px solid #fff;border-left:1px solid #fff;border-right:1px solid #404040;box-shadow:inset -1px 0 0 #808080;border-radius:0 2px 0 0"></div><svg class="a" style="left:67px;top:26px" width="15" height="15"><use href="#i-msg"/></svg><svg class="cj a" style="left:88px;top:28px" overflow="visible" width="24" height="12" viewBox="0 -880 2000 1000"><text x="0" y="0">消息</text></svg><div class="a" id="grid"><div class="a hc" style="left:1px;top:1px;width:37px"></div><div class="a hc" style="left:38px;top:1px;width:64px;padding-left:4px">FileName</div><div class="a hc" style="left:102px;top:1px;width:88px;padding-left:4px">FileSizeInMB</div><div class="a hc" style="left:190px;top:1px;width:116px;padding-left:4px">(<svg class="cj" overflow="visible" width="36" height="12" viewBox="0 -880 3000 1000"><text x="0" y="0">无列名</text></svg>)</div><div class="a hc" style="left:306px;top:1px;width:82px;padding-left:4px">GrowthValue</div><div class="a hc" style="left:388px;top:1px;width:189px;padding-left:4px">GrowthIncrement</div><div class="a hc rh" style="left:1px;top:21px;width:37px;height:21px">1</div><div class="a dc" style="left:38px;top:21px;width:64px;background:#d0d0d0;outline:1px dotted #000;outline-offset:-1px;margin-left:1px;padding-left:6px;height:22px;z-index:1">tempdev</div><div class="a dc" style="left:102px;top:21px;width:88px">8.000000</div><div class="a dc" style="left:190px;top:21px;width:116px">Autogrowth is on.</div><div class="a dc" style="left:306px;top:21px;width:82px">10</div><div class="a dc" style="left:388px;top:21px;width:189px">Growth value is a percentage.</div><div class="a hc rh" style="left:1px;top:42px;width:37px;height:21px">2</div><div class="a dc" style="left:38px;top:42px;width:64px">templog</div><div class="a dc" style="left:102px;top:42px;width:88px">0.750000</div><div class="a dc" style="left:190px;top:42px;width:116px">Autogrowth is on.</div><div class="a dc" style="left:306px;top:42px;width:82px">10</div><div class="a dc" style="left:388px;top:42px;width:189px">Growth value is a percentage.</div></div></div></div></body></html>
